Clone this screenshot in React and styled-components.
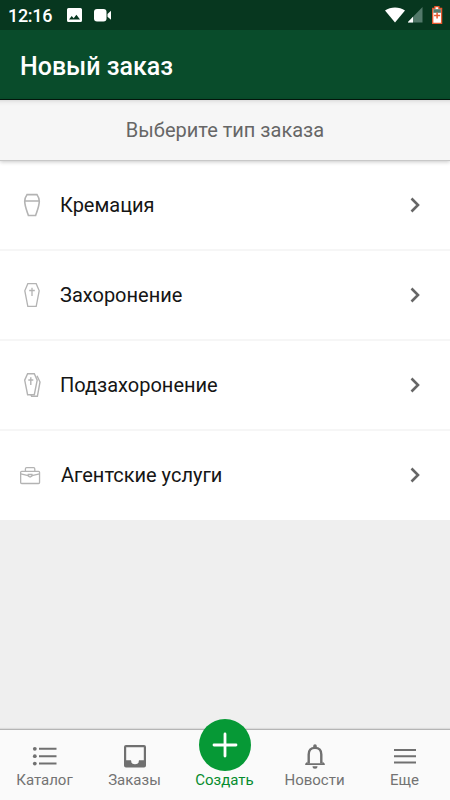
import React from 'react'
import styled, { createGlobalStyle } from 'styled-components'


const GlobalStyle = createGlobalStyle`
  * { box-sizing: border-box; }
  body { margin: 0; font-family: Roboto, "Noto Sans", sans-serif; }
`

const Screen = styled.div`
  width: 450px;
  height: 800px;
  display: flex;
  flex-direction: column;
  overflow: hidden;
  background: #efefef;
`

const StatusBar = styled.div`
  height: 30px;
  flex: none;
  display: flex;
  align-items: center;
  padding: 0 7px 0 8px;
  background: #07371f;
  color: #fff;
`

const Clock = styled.span`
  width: 59px;
  font-size: 18px;
  font-weight: 500;
  line-height: 30px;
  padding-top: 1px;
  letter-spacing: -0.3px;
`

const StatusIcons = styled.div`
  display: flex;
  align-items: center;
  gap: ${props => props.gap};
  margin-left: ${props => props.end ? 'auto' : '0'};

  svg { display: block; }
`

const Header = styled.header`
  height: 70px;
  flex: none;
  display: flex;
  align-items: center;
  padding: 3px 20px 0;
  background: #094c2b;
  border-bottom: 1px solid #03180d;
  color: #fff;
`

const Title = styled.h1`
  margin: 0;
  font-size: 25px;
  font-weight: 500;
`

const Subtitle = styled.div`
  height: 61px;
  flex: none;
  display: flex;
  align-items: center;
  justify-content: center;
  position: relative;
  background: linear-gradient(#dedede, #f0f0f0 3px, #f6f6f6 6px);
  border-bottom: 1px solid #c8c8c8;
  box-shadow: 0 1px 4px rgba(0, 0, 0, 0.22);
  color: #666;
  font-size: 20px;
`

const OrderTypes = styled.div`
  flex: none;
  height: 359px;
  background: #fff;
`

const Row = styled.div`
  height: 90px;
  display: flex;
  align-items: center;
  padding: 0 25px 0 20px;
  border: solid #f6f6f6;
  border-width: 1px 0;

  &:first-child {
    height: 89px;
    border-top: 0;
  }

  &:last-child { border-bottom-color: #fff; }
`

const RowIcon = styled.svg`
  width: 24px;
  height: 26px;
  flex: none;
  fill: none;
  stroke: #b3b3b3;
  stroke-width: ${props => props.weight || 1.3};
`

const RowLabel = styled.span`
  flex: 1;
  margin-left: ${props => props.inset || '16px'};
  font-size: 20px;
  line-height: 26px;
  color: #151515;
`

const Chevron = styled.svg`
  width: 20px;
  height: 20px;
  fill: none;
  stroke: #666;
  stroke-width: 2.6;
`

const Filler = styled.div`
  flex: 1;
`

const TabBar = styled.nav`
  height: 71px;
  flex: none;
  display: grid;
  grid-template-columns: repeat(5, 90px);
  background: #fafafa;
  border-top: 1px solid #b5b5b5;
  box-shadow: 0 -1px 1px rgba(0, 0, 0, 0.08);
`

const Tab = styled.div`
  position: relative;
  display: flex;
  flex-direction: column;
  align-items: center;
  padding-top: 13px;
  color: ${props => props.active ? '#068c2e' : '#737373'};
`

const TabIcon = styled.svg`
  width: 30px;
  height: 28px;
  fill: none;
  stroke: #707070;
  stroke-width: 2;
`

const TabLabel = styled.span`
  margin-right: 1px;
  font-size: 15px;
  line-height: 18px;
`

const CreateButton = styled.div`
  position: absolute;
  top: -11px;
  left: 19px;
  width: 52px;
  height: 52px;
  border-radius: 50%;
  background: #069936;

  svg { display: block; }
`


const Urn = () => (
  <RowIcon viewBox="0 0 24 26" weight={1.6}>
    <path d="M7 2.600h10c1.400 2 2.300 4 2.300 6.700 0 4.700-2 9.200-3.700 14.200H8.400C6.700 18.500 4.700 14 4.700 9.300 4.700 6.600 5.600 4.600 7 2.600ZM4.800 9h14.400" />
  </RowIcon>
)

const Coffin = () => (
  <RowIcon viewBox="0 0 24 26">
    <path d="M7.800 1.700h8.400l3 7-3 15.600H7.800l-3-15.600ZM12 5.700V14M9.200 8.500h5.600" />
  </RowIcon>
)

const DoubleCoffin = () => (
  <RowIcon viewBox="0 0 24 26" weight={1.4}>
    <path d="M7.600 1.700h6.700l2.900 6.500-2.900 14.500H7.600L4.700 8.200Z" />
    <path d="M10.800 5.200V13M8.300 8h5M17 3.800l3 6.200-2.600 14.300h-5.800l-.8-1.800" />
  </RowIcon>
)

const Briefcase = () => (
  <RowIcon viewBox="0 0 24 26" weight={1.3}>
    <rect x="0.650" y="9.300" width="18.900" height="12.200" rx="1" />
    <path d="M5.400 9.300V7q0-1.300 1.200-1.300h7q1.200 0 1.200 1.300v2.300M.7 11.800l7.600 1.900M19.500 11.800l-7.600 1.900M8.300 12.500h3.600v1.700l-1.800.9-1.800-.9Z" />
  </RowIcon>
)

const orderTypes = [
  { label: 'Кремация', icon: <Urn /> },
  { label: 'Захоронение', icon: <Coffin /> },
  { label: 'Подзахоронение', icon: <DoubleCoffin /> },
  { label: 'Агентские услуги', icon: <Briefcase />, inset: '17px' },
]

const ListGlyph = () => (
  <TabIcon viewBox="0 0 30 28">
    <path d="M9 5.800h17.500M9 13.200h17.500M9 20.600h17.500" />
    <g fill="#707070" stroke="none">
      <circle cx="4.800" cy="5.800" r="1.900" />
      <circle cx="4.800" cy="13.200" r="1.900" />
      <circle cx="4.800" cy="20.600" r="1.900" />
    </g>
  </TabIcon>
)

const InboxGlyph = () => (
  <TabIcon viewBox="0.5 0 30 28">
    <path fill="#707070" stroke="none" fillRule="evenodd" d="M6.500 2h18a2 2 0 0 1 2 2v18.500a2 2 0 0 1-2 2h-18a2 2 0 0 1-2-2V4a2 2 0 0 1 2-2ZM6.700 4.300v13h4.800a4 4 0 0 0 8 0h4.800v-13Z" />
  </TabIcon>
)

const BellGlyph = () => (
  <TabIcon viewBox="0.5 0 30 28">
    <path strokeWidth="2.400" d="M9.200 20.600V11.500C9.200 7.200 11.600 4.900 15.500 4.900s6.300 2.300 6.300 6.600v9.100" />
    <path fill="#707070" stroke="none" d="M13.700 4.500V3a1.800 1.800 0 0 1 3.600 0v1.500ZM8 18.500l-2.300 2.300V22h19.600v-1.200L23 18.500v1.800H8ZM13 23.200h5a2.500 2.500 0 0 1-5 0Z" />
  </TabIcon>
)

const MenuGlyph = () => (
  <TabIcon viewBox="0.5 0 30 28">
    <path d="M4.500 6.900h22M4.500 13.200h22M4.500 19.500h22" />
  </TabIcon>
)

const tabs = [
  { label: 'Каталог', icon: <ListGlyph /> },
  { label: 'Заказы', icon: <InboxGlyph /> },
  { label: 'Создать', active: true },
  { label: 'Новости', icon: <BellGlyph /> },
  { label: 'Еще', icon: <MenuGlyph /> },
]


const App = () => {
  return (
    <>
      <GlobalStyle />
      <Screen>
        <StatusBar>
          <Clock>12:16</Clock>
          <StatusIcons gap="12px">
            <svg width="15" height="14" viewBox="0 0 15 14">
              <path fill="#fff" fillRule="evenodd" d="M1.500 0h12A1.500 1.500 0 0 1 15 1.500v11a1.500 1.500 0 0 1-1.500 1.500h-12A1.500 1.500 0 0 1 0 12.500v-11A1.500 1.500 0 0 1 1.500 0ZM2 11.500h11L9.400 6.800l-2.700 3.500-2-2.300Z" />
            </svg>
            <svg width="18" height="13" viewBox="0 0 18 13">
              <rect width="12.500" height="12.500" rx="3" fill="#fff" />
              <path fill="#fff" d="m13.500 5 3.500-3.200v9L13.500 7.800Z" />
            </svg>
          </StatusIcons>
          <StatusIcons gap="3px" end="true">
            <svg width="20" height="16" viewBox="0 0 20 16">
              <path fill="#fff" d="M0 3.500C5.500-.4 14.500-.4 20 3.500L10 15.500Z" />
            </svg>
            <svg width="15" height="16" viewBox="0.5 0 15 16">
              <path fill="#53796a" d="M15 0v15.500H0Z" />
              <path fill="#fff" d="M5.500 9.700v5.800H0Z" />
            </svg>
            <svg width="17" height="18" viewBox="0 0 17 18">
              <path fill="#fff" stroke="#e8582d" strokeWidth="1.300" d="M8.900 2.500V.7h4v1.800h2.700v14.800H6.700V2.500Z" />
              <path fill="#53796a" d="M7.400 3.200h7.500v3.600H7.400Z" />
              <path stroke="#e8582d" strokeWidth="1.500" d="M11.100 6.500v6M8.100 9.500h6" />
            </svg>
          </StatusIcons>
        </StatusBar>

        <Header>
          <Title>Новый заказ</Title>
        </Header>
        <Subtitle>Выберите тип заказа</Subtitle>

        <OrderTypes>
          {orderTypes.map(type => (
            <Row key={type.label}>
              {type.icon}
              <RowLabel inset={type.inset}>{type.label}</RowLabel>
              <Chevron viewBox="0 0 20 20">
                <path d="m6.500 3.500 6.500 6.500-6.500 6.500" />
              </Chevron>
            </Row>
          ))}
        </OrderTypes>

        <Filler />

        <TabBar>
          {tabs.map(tab => (
            <Tab key={tab.label} active={tab.active ? 1 : undefined}>
              {tab.active
                ? <>
                    <CreateButton>
                      <svg width="52" height="52" viewBox="0 0 52 52">
                        <path d="M26 15v22M15 26h22" stroke="#fff" strokeWidth="2.800" strokeLinecap="round" />
                      </svg>
                    </CreateButton>
                    <TabIcon />
                  </>
                : tab.icon}
              <TabLabel>{tab.label}</TabLabel>
            </Tab>
          ))}
        </TabBar>
      </Screen>
    </>
  )
}

export default App
